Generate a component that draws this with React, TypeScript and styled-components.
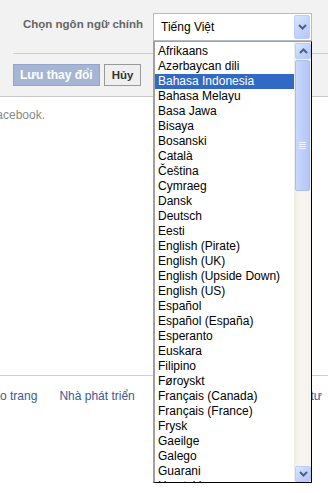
import React from "react";
import styled, { createGlobalStyle } from "styled-components";

const Global = createGlobalStyle`
  html, body { margin: 0; padding: 0; background: #fff; }
  body { font-family: "Liberation Sans", Arial, sans-serif; overflow: hidden; }
  * { box-sizing: border-box; }
`;

const Page = styled.div`
  position: relative;
  width: 328px;
  height: 493px;
  overflow: hidden;
`;

const Panel = styled.div`
  background: #f2f2f2;
  border-bottom: 1px solid #c9c9c9;
  height: 97px;
  padding-top: 13px;
`;

const FieldRow = styled.div`
  display: flex;
  align-items: center;
  height: 28px;
`;

const Label = styled.div`
  width: 153px;
  padding-left: 23px;
  font-size: 11.5px;
  font-weight: bold;
  color: #666;
  padding-bottom: 6px;
`;

const SelectBox = styled.div`
  width: 159px;
  height: 28px;
  background: #fff;
  border: 1px solid #b4bbc4;
  display: flex;
  align-items: stretch;
  padding: 1px;
`;

const SelectValue = styled.div`
  flex: 1;
  display: flex;
  align-items: center;
  padding-left: 6px;
  font-size: 12px;
  color: #000;
`;

const XpButton = styled.div<{ $h: number }>`
  width: 16px;
  height: ${(p) => p.$h}px;
  border: 1px solid #bccdf6;
  border-radius: 2px;
  background: linear-gradient(135deg, #dbe6ff 0%, #c3d4fc 50%, #b4c8f7 100%);
  display: flex;
  align-items: center;
  justify-content: center;
`;

const Divider = styled.div`
  margin: 12px 0 0 13px;
  border-top: 1px solid #cfcfcf;
`;

const Buttons = styled.div`
  display: flex;
  gap: 4px;
  margin: 10px 0 0 13px;
`;

const Btn = styled.div<{ $primary?: boolean }>`
  height: 22px;
  padding: 0 ${(p) => (p.$primary ? 6 : 7)}px;
  display: flex;
  align-items: center;
  font-size: ${(p) => (p.$primary ? 12 : 11.5)}px;
  font-weight: bold;
  color: ${(p) => (p.$primary ? "#fff" : "#333")};
  background: ${(p) => (p.$primary ? "#a7b5d4" : "#efefef")};
  border: 1px solid ${(p) => (p.$primary ? "#95a5c8" : "#999")};
`;

const Note = styled.p`
  margin: 11px 0 0 0;
  font-size: 12px;
  color: #8a8a8a;
  text-indent: -11px;
  line-height: 14px;
`;

const Footer = styled.div`
  margin-top: 253px;
  border-top: 1px solid #d0d0d0;
  padding-top: 13px;
  display: flex;
  gap: 22px;
  white-space: nowrap;
`;

const FootLink = styled.a<{ $shift?: number }>`
  font-size: 12px;
  color: #3b5998;
  text-decoration: none;
  margin-left: ${(p) => p.$shift ?? 0}px;
`;

const Dropdown = styled.div`
  position: absolute;
  left: 153px;
  top: 41px;
  width: 159px;
  height: 442px;
  background: #fff;
  border-left: 2px solid #a0a0a0;
  border-top: 1px solid #a0a0a0;
  border-right: 1px solid #000;
  border-bottom: 1px solid #000;
  display: flex;
`;

const Items = styled.div`
  flex: 1;
  overflow: hidden;
  padding-top: 2px;
`;

const Item = styled.div<{ $sel?: boolean }>`
  height: 15px;
  line-height: 15px;
  padding-left: 3px;
  font-size: 12px;
  white-space: nowrap;
  color: ${(p) => (p.$sel ? "#fff" : "#000")};
  background: ${(p) => (p.$sel ? "#316ac5" : "transparent")};
`;

const Scrollbar = styled.div`
  width: 17px;
  background: linear-gradient(90deg, #eeede5 0%, #f7f6f1 40%, #f3f2ec 100%);
  display: flex;
  flex-direction: column;
  padding: 1px 1px 0 1px;
`;

const Thumb = styled.div`
  margin-top: 1px;
  height: 131px;
  border: 1px solid #a9bdf0;
  border-radius: 2px;
  background: linear-gradient(90deg, #c9d8fd 0%, #bccffb 50%, #b3c6f6 100%);
  display: flex;
  align-items: center;
  justify-content: center;
  padding-top: 40px;
`;

const Track = styled.div`
  flex: 1;
`;

const Chevron = ({ up }: { up?: boolean }) => (
  <svg width="9" height="6" viewBox="0 0 9 6">
    <path
      d={up ? "M1 5 L4.5 1.5 L8 5" : "M1 1 L4.5 4.5 L8 1"}
      fill="none"
      stroke="#4d6185"
      strokeWidth="2"
    />
  </svg>
);

const Grip = () => (
  <svg width="7" height="8" viewBox="0 0 7 8">
    {[0.5, 2.5, 4.5, 6.5].map((y) => (
      <line key={y} x1="0" x2="7" y1={y} y2={y} stroke="#eef3ff" strokeWidth="1" />
    ))}
  </svg>
);

const languages = [
  "Afrikaans",
  "Azərbaycan dili",
  "Bahasa Indonesia",
  "Bahasa Melayu",
  "Basa Jawa",
  "Bisaya",
  "Bosanski",
  "Català",
  "Čeština",
  "Cymraeg",
  "Dansk",
  "Deutsch",
  "Eesti",
  "English (Pirate)",
  "English (UK)",
  "English (Upside Down)",
  "English (US)",
  "Español",
  "Español (España)",
  "Esperanto",
  "Euskara",
  "Filipino",
  "Føroyskt",
  "Français (Canada)",
  "Français (France)",
  "Frysk",
  "Gaeilge",
  "Galego",
  "Guarani",
  "Hrvatski",
];

export default function App() {
  return (
    <Page>
      <Global />
      <Panel>
        <FieldRow>
          <Label>Chọn ngôn ngữ chính</Label>
          <SelectBox>
            <SelectValue>Tiếng Việt</SelectValue>
            <XpButton $h={24}>
              <Chevron />
            </XpButton>
          </SelectBox>
        </FieldRow>
        <Divider />
        <Buttons>
          <Btn $primary>Lưu thay đổi</Btn>
          <Btn>Hủy</Btn>
        </Buttons>
      </Panel>
      <Note>Facebook.</Note>
      <Footer>
        <FootLink href="#" $shift={-14}>Tạo trang</FootLink>
        <FootLink href="#">Nhà phát triển</FootLink>
        <FootLink href="#">Tuyển dụng</FootLink>
        <FootLink href="#">Quyền riêng tư</FootLink>
      </Footer>
      <Dropdown>
        <Items>
          {languages.map((l, i) => (
            <Item key={l} $sel={i === 2}>
              {l}
            </Item>
          ))}
        </Items>
        <Scrollbar>
          <XpButton $h={16}>
            <Chevron up />
          </XpButton>
          <Thumb>
            <Grip />
          </Thumb>
          <Track />
          <XpButton $h={16}>
            <Chevron />
          </XpButton>
        </Scrollbar>
      </Dropdown>
    </Page>
  );
}
